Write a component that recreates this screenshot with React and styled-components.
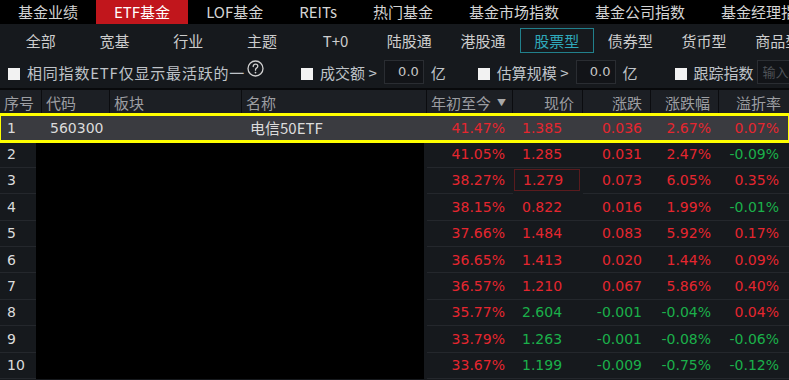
import styled, { createGlobalStyle } from 'styled-components';

const GlobalStyle = createGlobalStyle`
  html, body {
    margin: 0;
    padding: 0;
    background: #000;
    overflow: hidden;
  }
  * {
    box-sizing: border-box;
  }
`;

const CJK = `"Noto Sans CJK SC", "Noto Sans", sans-serif`;
const NUM = `"DejaVu Sans", "Noto Sans CJK SC", sans-serif`;

const RED = '#e5262f';
const GREEN = '#1bb04a';

const topTabs = ['基金业绩', 'ETF基金', 'LOF基金', 'REITs', '热门基金', '基金市场指数', '基金公司指数', '基金经理指数'];
const subTabs = ['全部', '宽基', '行业', '主题', 'T+0', '陆股通', '港股通', '股票型', '债券型', '货币型', '商品型'];

const columns = [
    {title: '序号', align: 'left'},
    {title: '代码', align: 'left'},
    {title: '板块', align: 'left'},
    {title: '名称', align: 'left'},
    {title: '年初至今', align: 'left', sort: true},
    {title: '现价', align: 'right'},
    {title: '涨跌', align: 'right'},
    {title: '涨跌幅', align: 'right'},
    {title: '溢折率', align: 'right'},
];

const rows = [
    {ytd: '41.47%', price: '1.385', chg: '0.036', pct: '2.67%', prem: '0.07%', code: '560300', name: '电信50ETF'},
    {ytd: '41.05%', price: '1.285', chg: '0.031', pct: '2.47%', prem: '-0.09%'},
    {ytd: '38.27%', price: '1.279', chg: '0.073', pct: '6.05%', prem: '0.35%', boxed: true},
    {ytd: '38.15%', price: '0.822', chg: '0.016', pct: '1.99%', prem: '-0.01%'},
    {ytd: '37.66%', price: '1.484', chg: '0.083', pct: '5.92%', prem: '0.17%'},
    {ytd: '36.65%', price: '1.413', chg: '0.020', pct: '1.44%', prem: '0.09%'},
    {ytd: '36.57%', price: '1.210', chg: '0.067', pct: '5.86%', prem: '0.40%'},
    {ytd: '35.77%', price: '2.604', chg: '-0.001', pct: '-0.04%', prem: '0.04%'},
    {ytd: '33.79%', price: '1.263', chg: '-0.001', pct: '-0.08%', prem: '-0.06%'},
    {ytd: '33.67%', price: '1.199', chg: '-0.009', pct: '-0.75%', prem: '-0.12%'},
];

const GRID = '42px 68px 132px 185px 86px 70px 68px 68px 70px';

const Page = styled.div`
  width: 789px;
  height: 380px;
  overflow: hidden;
  background: #16191d;
  display: flex;
  flex-direction: column;
`;

const TopBar = styled.div`
  height: 24px;
  background: #000;
  display: flex;
  white-space: nowrap;
  flex-shrink: 0;
`;

const TopTab = styled.div`
  padding: 0 18px;
  height: 24px;
  line-height: 24px;
  font-family: ${CJK};
  font-size: 15px;
  color: ${({$active}) => $active ? '#fff' : '#d4d4d4'};
  background: ${({$active}) => $active ? '#c1161c' : 'transparent'};
`;

const SubBar = styled.div`
  height: 32px;
  padding-left: 4px;
  display: flex;
  align-items: center;
  white-space: nowrap;
  flex-shrink: 0;
`;

const SubTab = styled.div`
  flex: 0 0 73.7px;
  height: 25px;
  display: flex;
  align-items: center;
  justify-content: center;
  font-family: ${CJK};
  font-size: 15px;
  color: ${({$active}) => $active ? '#2fa9bb' : '#cdcdcd'};
  border: 1px solid ${({$active}) => $active ? '#21808c' : 'transparent'};
`;

const FilterBar = styled.div`
  height: 34px;
  padding-left: 8px;
  display: flex;
  align-items: center;
  white-space: nowrap;
  border-bottom: 2px solid #08090b;
  flex-shrink: 0;
`;

const FilterGroup = styled.div`
  display: flex;
  align-items: center;
  margin-left: ${({$ml}) => $ml || 0}px;
`;

const Check = styled.span`
  width: 12px;
  height: 12px;
  background: #f2f2f2;
  margin: 3px 7px 0 0;
  flex-shrink: 0;
`;

const Label = styled.span`
  font-family: ${CJK};
  font-size: 15px;
  letter-spacing: ${({$ls}) => $ls || 0}px;
  color: #bfc3c8;
`;

const Box = styled.span`
  width: 40px;
  height: 24px;
  margin: 0 7px;
  background: #121418;
  border: 1px solid #2a2d32;
  font-family: ${NUM};
  font-size: 13px;
  line-height: 22px;
  color: #c6c6c6;
  text-align: right;
  padding-right: 4px;
  overflow: hidden;
`;

const Placeholder = styled(Box)`
  width: 40px;
  margin-right: 0;
  margin-left: 3px;
  text-align: left;
  padding-left: 5px;
  font-family: ${CJK};
  font-size: 13px;
  color: #4e5257;
`;

const HeaderRow = styled.div`
  display: grid;
  grid-template-columns: ${GRID};
  height: 25px;
  background: #1c1f24;
  flex-shrink: 0;
`;

const HeadCell = styled.div`
  border-right: 1px solid #0b0c0f;
  padding: 0 ${({$align}) => $align === 'right' ? '8px' : '0'} 0 ${({$align}) => $align === 'right' ? '0' : '4px'};
  display: flex;
  align-items: center;
  justify-content: ${({$align}) => $align === 'right' ? 'flex-end' : 'flex-start'};
  font-family: ${CJK};
  font-size: 15px;
  color: #9c9ea2;
  &:last-child {
    border-right: none;
  }
`;

const SortMark = styled.span`
  margin-left: 6px;
  font-size: 9px;
  color: #a8a8a8;
`;

const Row = styled.div`
  display: grid;
  grid-template-columns: ${GRID};
  height: 26.4px;
  flex-shrink: 0;
  background: ${({$selected}) => $selected ? '#3a3b40' : 'transparent'};
  outline: ${({$selected}) => $selected ? '3px solid #ffff00' : 'none'};
  outline-offset: -1px;
  position: relative;
  z-index: ${({$selected}) => $selected ? 1 : 0};
`;

const Cell = styled.div`
  display: flex;
  align-items: center;
  justify-content: ${({$align}) => $align === 'right' ? 'flex-end' : 'flex-start'};
  padding: 0 ${({$pr}) => $pr ?? 0}px 0 ${({$pl}) => $pl ?? 0}px;
  border-bottom: 1px solid ${({$selected}) => $selected ? 'transparent' : '#24272c'};
  font-family: ${NUM};
  font-size: 14px;
  color: ${({$color}) => $color || '#dcdcdc'};
  white-space: nowrap;
`;

const NameCell = styled(Cell)`
  font-family: ${CJK};
  font-size: 15px;
`;

const PriceCell = styled(Cell)`
  box-shadow: ${({$boxed}) => $boxed ? 'inset 0 0 0 1px #5a1b1e' : 'none'};
  margin: ${({$boxed}) => $boxed ? '1px 3px 2px 1px' : '0'};
  border-bottom-color: ${({$boxed, $selected}) => $selected || $boxed ? 'transparent' : '#24272c'};
`;

const Mask = styled.div`
  grid-column: 2 / 5;
  margin: 0 3px 0 -6px;
  background: #000;
`;

const Help = () => (
    <svg width="17" height="17" viewBox="0 0 17 17" style={{marginLeft: 2, marginTop: -8}}>
        <circle cx="8.5" cy="8.5" r="7.5" fill="none" stroke="#d0d0d0" strokeWidth="1.3"/>
        <path d="M6.2 6.6 C6.2 4.9 7.3 4.2 8.5 4.2 C9.8 4.2 10.8 5 10.8 6.3 C10.8 7.6 9.6 8 9 8.5 C8.6 8.9 8.5 9.3 8.5 10.2" fill="none" stroke="#d0d0d0" strokeWidth="1.3" strokeLinecap="round"/>
        <circle cx="8.5" cy="12.6" r="0.9" fill="#d0d0d0"/>
    </svg>
);

const signColor = (value) => value.startsWith('-') ? GREEN : RED;

export default function App() {
    return (
        <>
            <GlobalStyle/>
            <Page>
                <TopBar>
                    {topTabs.map((tab, i) => (
                        <TopTab key={tab} $active={i === 1}>{tab}</TopTab>
                    ))}
                </TopBar>
                <SubBar>
                    {subTabs.map((tab, i) => (
                        <SubTab key={tab} $active={i === 7}>{tab}</SubTab>
                    ))}
                </SubBar>
                <FilterBar>
                    <FilterGroup>
                        <Check/>
                        <Label $ls={0.8}>相同指数ETF仅显示最活跃的一</Label>
                        <Help/>
                    </FilterGroup>
                    <FilterGroup $ml={37}>
                        <Check/>
                        <Label>成交额 &gt;</Label>
                        <Box>0.0</Box>
                        <Label>亿</Label>
                    </FilterGroup>
                    <FilterGroup $ml={32}>
                        <Check/>
                        <Label>估算规模 &gt;</Label>
                        <Box>0.0</Box>
                        <Label>亿</Label>
                    </FilterGroup>
                    <FilterGroup $ml={37}>
                        <Check/>
                        <Label>跟踪指数</Label>
                        <Placeholder>输入</Placeholder>
                    </FilterGroup>
                </FilterBar>
                <HeaderRow>
                    {columns.map(col => (
                        <HeadCell key={col.title} $align={col.align}>
                            {col.title}
                            {col.sort && <SortMark>▼</SortMark>}
                        </HeadCell>
                    ))}
                </HeaderRow>
                {rows.map((row, i) => {
                    const selected = i === 0;
                    const trend = signColor(row.chg);
                    return (
                        <Row key={i} $selected={selected}>
                            <Cell $pl={7} $selected={selected}>{i + 1}</Cell>
                            {selected ? (
                                <>
                                    <Cell $pl={8} $selected>{row.code}</Cell>
                                    <Cell $selected/>
                                    <NameCell $pl={8} $selected>{row.name}</NameCell>
                                </>
                            ) : (
                                <Mask/>
                            )}
                            <Cell $align="right" $pr={8} $color={RED} $selected={selected}>{row.ytd}</Cell>
                            <PriceCell $pl={9} $color={trend} $selected={selected} $boxed={row.boxed}>{row.price}</PriceCell>
                            <Cell $align="right" $pr={9} $color={trend} $selected={selected}>{row.chg}</Cell>
                            <Cell $align="right" $pr={8} $color={signColor(row.pct)} $selected={selected}>{row.pct}</Cell>
                            <Cell $align="right" $pr={10} $color={signColor(row.prem)} $selected={selected}>{row.prem}</Cell>
                        </Row>
                    );
                })}
            </Page>
        </>
    );
}
